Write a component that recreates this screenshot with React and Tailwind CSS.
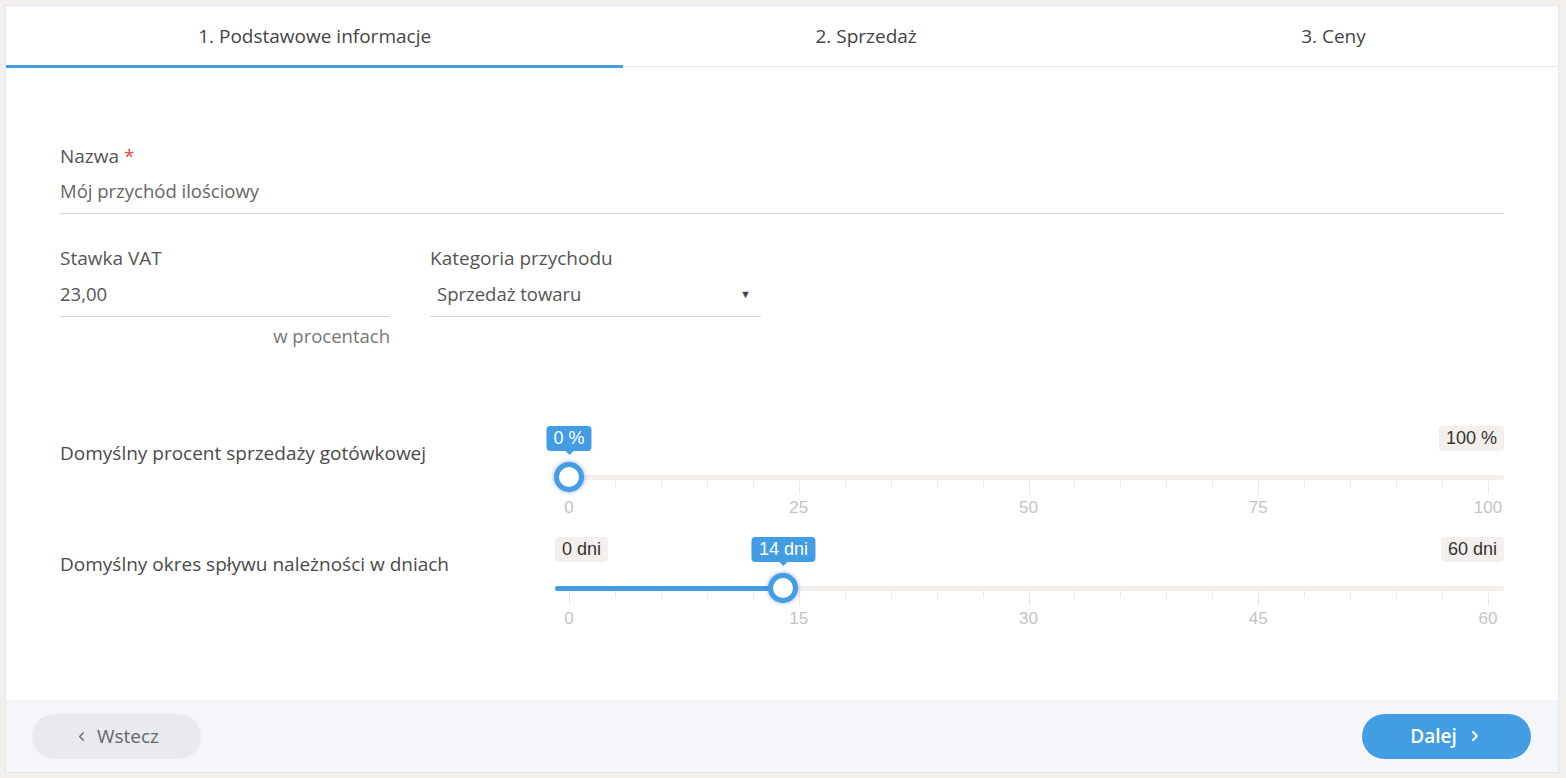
import React from "react";
import { ChevronLeft, ChevronRight } from "lucide-react";

const FONT = { fontFamily: "'Open Sans', Lato, sans-serif" };
const ARIAL = { fontFamily: "'Liberation Sans', Arial, sans-serif" };

function Tabs() {
  const tabs = ["1. Podstawowe informacje", "2. Sprzedaż", "3. Ceny"];
  return (
    <div className="flex border-b border-[#e8e8e8]">
      {tabs.map((t, i) => (
        <div
          key={t}
          className="relative flex-auto h-[60px] flex items-center justify-center text-[19px] text-[#444]"
        >
          {t}
          {i === 0 && (
            <div className="absolute left-0 right-0 -bottom-[2px] h-[3px] bg-[#429de3]" />
          )}
        </div>
      ))}
    </div>
  );
}

function Slider({ min, max, value, unit, ticks, major, hideMin }) {
  const pct = ((value - min) / (max - min)) * 100;
  const tickList = [];
  for (let i = 0; i <= ticks; i++) {
    const isMajor = i % major === 0;
    tickList.push(
      <div
        key={i}
        className={`absolute top-[54px] w-px bg-[#ece8e4] ${isMajor ? "h-[14px]" : "h-[7px]"}`}
        style={{ left: `${(i / ticks) * 100}%` }}
      />
    );
  }
  const labels = [];
  const steps = ticks / major;
  for (let i = 0; i <= steps; i++) {
    const v = min + ((max - min) * i) / steps;
    labels.push(
      <div
        key={i}
        className="absolute top-[72px] -translate-x-1/2 text-[17px] leading-[20px] text-[#c4c4c4]"
        style={{ left: `${(i / steps) * 100}%`, ...ARIAL }}
      >
        {v}
      </div>
    );
  }
  return (
    <div className="relative flex-1 h-[96px]" style={ARIAL}>
      {/* track */}
      <div className="absolute left-0 right-0 top-[49px] h-[5px] rounded-full bg-[#f2efec]" />
      {!hideMin && (
        <div className="absolute left-0 top-0 h-[25px] px-[7px] rounded-[4px] bg-[#f2efec] text-[#333] text-[18px] leading-[25px]">
          {min} {unit}
        </div>
      )}
      <div className="absolute right-0 top-0 h-[25px] px-[7px] rounded-[4px] bg-[#f2efec] text-[#333] text-[18px] leading-[25px]">
        {max} {unit}
      </div>
      <div className="absolute left-[14px] right-[16px] top-0 bottom-0">
        {/* filled part */}
        {pct > 0 && (
          <div
            className="absolute -left-[14px] top-[49px] h-[5px] rounded-l-full bg-[#429de3]"
            style={{ width: `calc(${pct}% + 14px)` }}
          />
        )}
        {tickList}
        {labels}
        {/* current value tooltip */}
        <div
          className="absolute top-0 -translate-x-1/2 flex flex-col items-center"
          style={{ left: `${pct}%` }}
        >
          <div className="h-[25px] px-[7px] rounded-[4px] bg-[#429de3] text-white text-[18px] leading-[25px] whitespace-nowrap">
            {value} {unit}
          </div>
          <div className="w-0 h-0 border-l-[4px] border-r-[4px] border-t-[4px] border-l-transparent border-r-transparent border-t-[#429de3]" />
        </div>
        {/* handle */}
        <div
          className="absolute top-[36px] w-[30px] h-[30px] -translate-x-1/2 rounded-full border-[5px] border-[#429de3] bg-white shadow-[0_0_4px_rgba(66,100,227,0.6)]"
          style={{ left: `${pct}%` }}
        />
      </div>
    </div>
  );
}

function SliderRow({ label, ...props }) {
  return (
    <div className="flex">
      <div className="w-[495px] pt-[15px] text-[19px] leading-6 text-[#4a4a4a]">{label}</div>
      <Slider {...props} />
    </div>
  );
}

export default function App() {
  return (
    <div className="w-[1566px] h-[778px] bg-[#f2efec] pt-[5px] pl-[5px]" style={FONT}>
      <div className="w-[1554px] h-[768px] bg-white border border-[#e2e5ee] flex flex-col">
        <Tabs />
        <div className="flex-1 px-[54px] pt-[77px]">
          {/* Nazwa */}
          <div className="text-[19px] leading-6 text-[#555]">
            Nazwa <span className="text-[#e8474c]">*</span>
          </div>
          <div className="mt-[11px] pb-[10px] border-b border-[#d3d7e2] text-[18.5px] leading-6 text-[#666]">
            Mój przychód ilościowy
          </div>

          {/* VAT + kategoria */}
          <div className="mt-[32px] flex gap-[40px]">
            <div className="w-[330px]">
              <div className="text-[19px] leading-6 text-[#555]">Stawka VAT</div>
              <div className="mt-[12px] pb-[10px] border-b border-[#d3d7e2] text-[18.5px] leading-6 text-[#555]">
                23,00
              </div>
              <div className="mt-[7px] text-right text-[18.5px] leading-6 text-[#777]">w procentach</div>
            </div>
            <div className="w-[331px]">
              <div className="text-[19px] leading-6 text-[#555]">Kategoria przychodu</div>
              <div className="mt-[12px] pb-[10px] pl-[7px] pr-[10px] border-b border-[#d3d7e2] flex items-center justify-between text-[18.5px] leading-6 text-[#555]">
                <span>Sprzedaż towaru</span>
                <span className="text-[11px] text-[#444]">▼</span>
              </div>
            </div>
          </div>

          <div className="mt-[78px] flex flex-col gap-[15px]">
            <SliderRow
              label="Domyślny procent sprzedaży gotówkowej"
              min={0}
              max={100}
              value={0}
              unit="%"
              ticks={20}
              major={5}
              hideMin
            />
            <SliderRow
              label="Domyślny okres spływu należności w dniach"
              min={0}
              max={60}
              value={14}
              unit="dni"
              ticks={20}
              major={5}
            />
          </div>
        </div>

        {/* footer */}
        <div className="h-[72px] bg-[#f5f6f9] flex items-center justify-between pl-[26px] pr-[27px]">
          <button className="h-[45px] w-[169px] rounded-full bg-[#e9eaef] text-[#666] text-[19px] flex items-center justify-center gap-[8px]">
            <ChevronLeft size={15} strokeWidth={2} className="text-[#666]" />
            Wstecz
          </button>
          <button className="h-[45px] w-[169px] rounded-full bg-[#429de3] text-white font-semibold text-[19px] flex items-center justify-center gap-[10px]">
            Dalej
            <ChevronRight size={16} strokeWidth={3} />
          </button>
        </div>
      </div>
    </div>
  );
}
